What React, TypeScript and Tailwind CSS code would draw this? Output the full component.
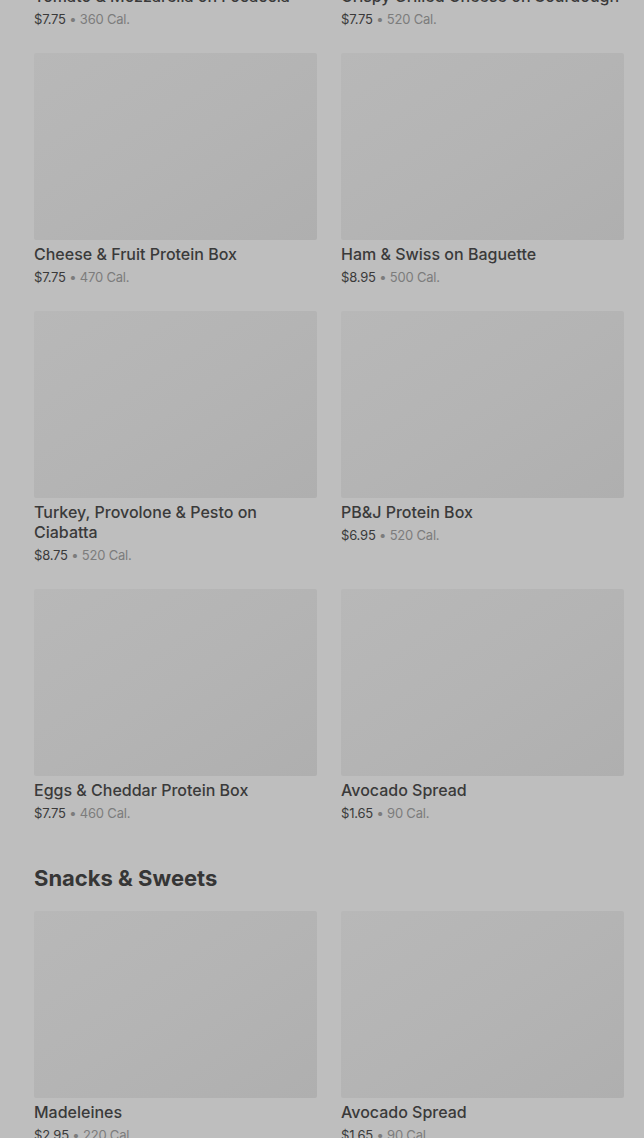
type Item = { name: string; price: string; cal: string };

const top: Item[] = [
  { name: 'Tomato & Mozzarella on Focaccia', price: '$7.75', cal: '360 Cal.' },
  { name: 'Crispy Grilled Cheese on Sourdough', price: '$7.75', cal: '520 Cal.' },
  { name: 'Cheese & Fruit Protein Box', price: '$7.75', cal: '470 Cal.' },
  { name: 'Ham & Swiss on Baguette', price: '$8.95', cal: '500 Cal.' },
  { name: 'Turkey, Provolone & Pesto on Ciabatta', price: '$8.75', cal: '520 Cal.' },
  { name: 'PB&J Protein Box', price: '$6.95', cal: '520 Cal.' },
  { name: 'Eggs & Cheddar Protein Box', price: '$7.75', cal: '460 Cal.' },
  { name: 'Avocado Spread', price: '$1.65', cal: '90 Cal.' },
];

const snacks: Item[] = [
  { name: 'Madeleines', price: '$2.95', cal: '220 Cal.' },
  { name: 'Avocado Spread', price: '$1.65', cal: '90 Cal.' },
];

function Card({ item }: { item: Item }) {
  return (
    <div className="flex flex-col">
      <div className="h-[187px] rounded-[2px] bg-gradient-to-br from-[#b8b8b8] via-[#b4b4b4] to-[#afafaf]" />
      <div className="mt-[4px] text-[16px] leading-[20px] font-medium text-[#3a3a3a]">{item.name}</div>
      <div className="mt-[3px] text-[13px] leading-[20px] tracking-[-0.2px]">
        <span className="text-[#3a3a3a]">{item.price}</span>
        <span className="text-[#7c7c7c]"> • {item.cal}</span>
      </div>
    </div>
  );
}

export default function App() {
  return (
    <div className="h-[1138px] overflow-hidden bg-[#bebebe] font-['Inter',sans-serif]">
      <div className="mt-[-205px] pl-[34px] pr-[20px]">
        <div className="grid grid-cols-2 gap-x-[24px] gap-y-[24px]">
          {top.map((it, i) => (
            <Card key={i} item={it} />
          ))}
        </div>
        <h2 className="mt-[39px] mb-[17px] text-[22px] leading-[32px] font-bold text-[#363636]">
          Snacks &amp; Sweets
        </h2>
        <div className="grid grid-cols-2 gap-x-[24px] gap-y-[24px]">
          {snacks.map((it, i) => (
            <Card key={i} item={it} />
          ))}
        </div>
      </div>
    </div>
  );
}
